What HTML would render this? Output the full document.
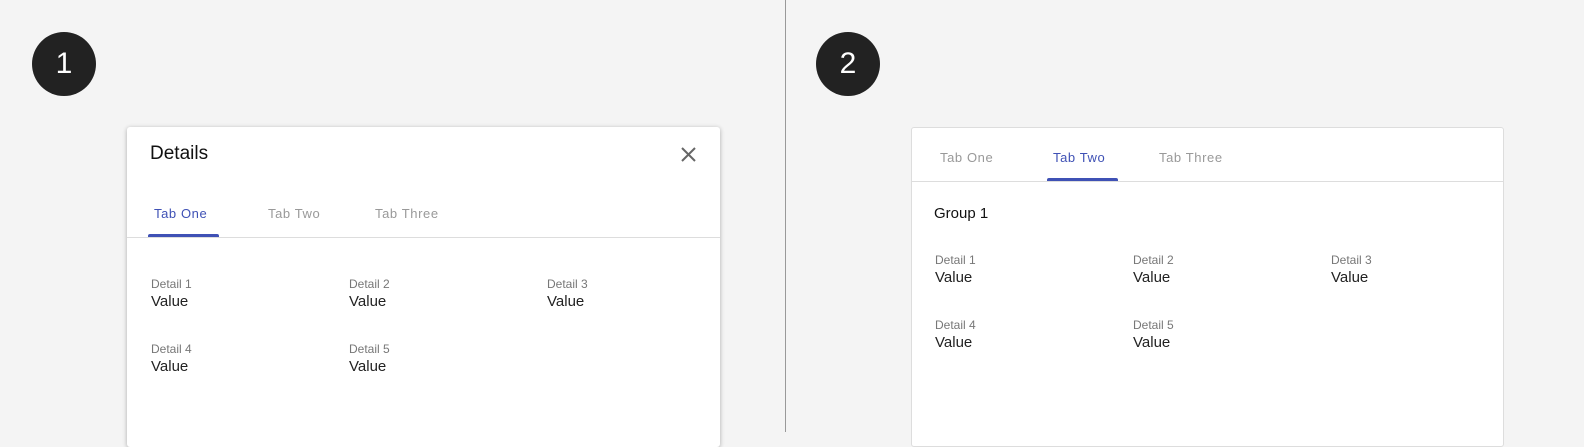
<!DOCTYPE html>
<html><head><style>
*{margin:0;padding:0;box-sizing:border-box}
body{width:1584px;height:432px;background:#f4f4f4;position:relative;overflow:hidden;font-family:"Liberation Sans",sans-serif}
.a{position:absolute;white-space:nowrap}
.c{position:absolute;width:64px;height:64px;border-radius:50%;background:#222;color:#fff;font-size:30px;line-height:64px;text-align:center}
.p{position:absolute;background:#fff}
.l{font-size:12px;color:#777}
.v{font-size:15px;color:#222}
.t{font-size:13px;color:#999;letter-spacing:.6px}
.on{color:#3f51b5}
</style></head><body>
<div class="c" style="left:32px;top:32px">1</div>
<div class="c" style="left:816px;top:32px">2</div>
<div style="position:absolute;left:785px;top:0;width:1px;height:432px;background:#999"></div>

<div class="p" style="left:127px;top:127px;width:593px;height:320px;border-radius:3px;box-shadow:0 1px 5px rgba(0,0,0,.3)"></div>
<div class="a" style="left:150px;top:143px;font-size:19px;color:#111">Details</div>
<svg class="a" style="left:680px;top:146px" width="17" height="17" viewBox="0 0 17 17"><path d="M2 2L15 15M15 2L2 15" stroke="#666" stroke-width="2"/></svg>
<div class="a t on" style="left:154px;top:206px">Tab One</div>
<div class="a t" style="left:268px;top:206px">Tab Two</div>
<div class="a t" style="left:375px;top:206px">Tab Three</div>
<div class="a" style="left:148px;top:234px;width:71px;height:3px;background:#3f51b5;border-radius:2px 2px 0 0"></div>
<div class="a" style="left:127px;top:237px;width:593px;height:1px;background:#ddd"></div>
<div class="a l" style="left:151px;top:277px">Detail 1</div><div class="a v" style="left:151px;top:293px">Value</div>
<div class="a l" style="left:349px;top:277px">Detail 2</div><div class="a v" style="left:349px;top:293px">Value</div>
<div class="a l" style="left:547px;top:277px">Detail 3</div><div class="a v" style="left:547px;top:293px">Value</div>
<div class="a l" style="left:151px;top:342px">Detail 4</div><div class="a v" style="left:151px;top:358px">Value</div>
<div class="a l" style="left:349px;top:342px">Detail 5</div><div class="a v" style="left:349px;top:358px">Value</div>

<div class="p" style="left:911px;top:127px;width:593px;height:320px;border:1px solid #ddd;border-radius:3px"></div>
<div class="a t" style="left:940px;top:150px">Tab One</div>
<div class="a t on" style="left:1053px;top:150px">Tab Two</div>
<div class="a t" style="left:1159px;top:150px">Tab Three</div>
<div class="a" style="left:1047px;top:178px;width:71px;height:3px;background:#3f51b5;border-radius:2px 2px 0 0"></div>
<div class="a" style="left:912px;top:181px;width:591px;height:1px;background:#ddd"></div>
<div class="a" style="left:934px;top:205px;font-size:15px;color:#111">Group 1</div>
<div class="a l" style="left:935px;top:253px">Detail 1</div><div class="a v" style="left:935px;top:269px">Value</div>
<div class="a l" style="left:1133px;top:253px">Detail 2</div><div class="a v" style="left:1133px;top:269px">Value</div>
<div class="a l" style="left:1331px;top:253px">Detail 3</div><div class="a v" style="left:1331px;top:269px">Value</div>
<div class="a l" style="left:935px;top:318px">Detail 4</div><div class="a v" style="left:935px;top:334px">Value</div>
<div class="a l" style="left:1133px;top:318px">Detail 5</div><div class="a v" style="left:1133px;top:334px">Value</div>
</body></html>
